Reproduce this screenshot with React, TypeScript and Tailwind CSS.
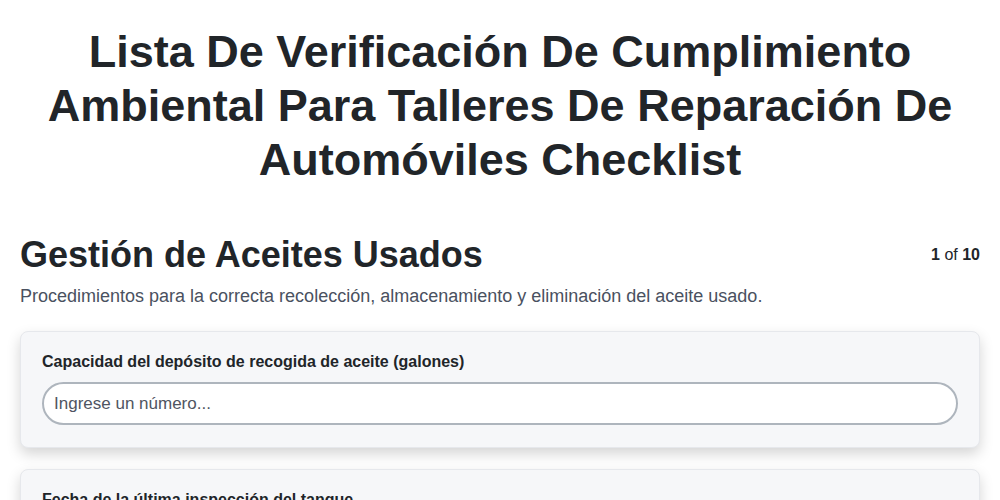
export default function App() {
  return (
    <div
      className="min-h-screen bg-white text-[#212529]"
      style={{ fontFamily: '"Liberation Sans", Arial, sans-serif' }}
    >
      <div className="px-5">
        <h1 className="pt-[25px] text-center text-[45px] font-bold leading-[54px]">
          Lista De Verificación De Cumplimiento Ambiental Para Talleres De Reparación De Automóviles Checklist
        </h1>

        <div className="mt-[46px] flex items-start justify-between">
          <h2 className="text-[36px] font-bold leading-[44px]">Gestión de Aceites Usados</h2>
          <div className="pt-[10px] text-[16px]">
            <span className="font-bold">1</span> of <span className="font-bold">10</span>
          </div>
        </div>
        <p className="mt-[6px] text-[18px] leading-[27px] text-[#4a5160]">
          Procedimientos para la correcta recolección, almacenamiento y eliminación del aceite usado.
        </p>

        <div className="mt-[21px] flex flex-col gap-[21px]">
          <div className="rounded-lg border border-[#e6e8ec] bg-[#f6f7f9] px-[21px] pb-[22px] pt-[18px] shadow-[0_6px_14px_rgba(0,0,0,0.17)]">
            <label className="block text-[16px] font-bold leading-6">
              Capacidad del depósito de recogida de aceite (galones)
            </label>
            <input
              type="text"
              placeholder="Ingrese un número..."
              className="mt-[8px] h-[43px] w-full rounded-full border-2 border-[#aeb5bd] bg-white px-[10px] text-[17px] text-[#212529] outline-none placeholder:text-[#4f5561]"
            />
          </div>

          <div className="rounded-lg border border-[#e6e8ec] bg-[#f6f7f9] px-[21px] pb-[22px] pt-[18px] shadow-[0_6px_14px_rgba(0,0,0,0.17)]">
            <label className="block text-[16px] font-bold leading-6">
              Fecha de la última inspección del tanque
            </label>
            <input
              type="date"
              className="mt-[8px] h-[43px] w-full rounded-full border-2 border-[#aeb5bd] bg-white px-[10px] text-[17px] outline-none"
            />
          </div>
        </div>
      </div>
    </div>
  );
}
